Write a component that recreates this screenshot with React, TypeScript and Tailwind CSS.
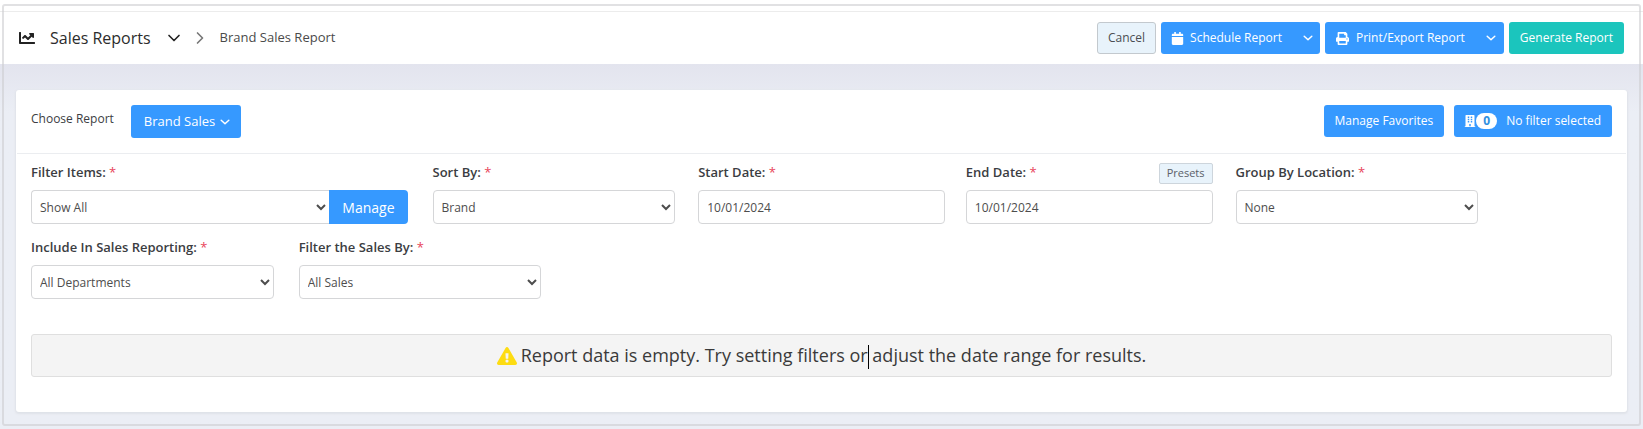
import type { ReactNode } from "react";
import { ChevronDown, ChevronRight } from "lucide-react";
import {
  FaBuilding,
  FaCalendar,
  FaChartLine,
  FaExclamationTriangle,
  FaPrint,
} from "react-icons/fa";

const control =
  "h-[34px] w-full min-w-0 rounded border border-[#d5d6d8] bg-white text-xs text-[#4d4d4d]";
const button =
  "flex h-8 items-center rounded-[3px] bg-[#3699ff] text-xs text-white whitespace-nowrap";

function Label({ id, children }: { id: string; children: ReactNode }) {
  return (
    <label htmlFor={id} className="text-[13px] font-semibold text-[#3b3d42]">
      {children} <span className="font-normal text-[#e8445a]">*</span>
    </label>
  );
}

function SmallChevron() {
  return (
    <svg viewBox="0 0 10 6" className="h-[6px] w-[10px]" fill="none" stroke="currentColor" strokeWidth="1.5" strokeLinecap="round" strokeLinejoin="round">
      <path d="M1.2 1.2 5 4.7 8.8 1.2" />
    </svg>
  );
}

function SelectField({ id, label, value }: { id: string; label: string; value: string }) {
  return (
    <div className="col-span-2">
      <div className="flex h-[26px] items-center">
        <Label id={id}>{label}</Label>
      </div>
      <select id={id} className={`${control} mt-1 pl-1`}>
        <option>{value}</option>
      </select>
    </div>
  );
}

export default function App() {
  return (
    <div className="relative flex flex-col bg-[#ebeef5] font-['Open_Sans',sans-serif] text-[#3b3d42]">
      <header className="bg-white pt-[11px]">
        <div className="flex items-center justify-between border-t border-[#ececec] px-[19px] py-[10px]">
          <div className="flex items-center">
            <FaChartLine className="size-4 text-[#222]" />
            <h1 className="ml-[15px] text-[16px] text-[#2c2c2c]">Sales Reports</h1>
            <button type="button" aria-label="Choose section" className="ml-[13px]">
              <ChevronDown className="size-5 text-[#222]" strokeWidth={2} />
            </button>
            <ChevronRight className="ml-[6px] size-5 text-[#777]" />
            <span className="ml-[10px] text-[13px] text-[#4a4a4a]">Brand Sales Report</span>
          </div>
          <div className="flex items-center gap-[5px]">
            <button
              type="button"
              className="h-8 rounded-[3px] border border-[#c3c9ce] bg-[#e8f3fb] px-[10px] text-xs text-[#4a4d52]"
            >
              Cancel
            </button>
            <div className={button}>
              <button type="button" className="flex h-full items-center gap-[6px] pl-[10px]">
                <FaCalendar className="size-[13px]" />
                Schedule Report
              </button>
              <button type="button" aria-label="Schedule options" className="ml-[21px] flex h-full items-center pr-[7px]">
                <SmallChevron />
              </button>
            </div>
            <div className={button}>
              <button type="button" className="flex h-full items-center gap-[7px] pl-[11px]">
                <FaPrint className="size-[13px]" />
                Print/Export Report
              </button>
              <button type="button" aria-label="Export options" className="ml-[21px] flex h-full items-center pr-2">
                <SmallChevron />
              </button>
            </div>
            <button type="button" className="h-8 rounded-[3px] bg-[#1bc5bd] px-[11px] text-xs text-white">
              Generate Report
            </button>
          </div>
        </div>
      </header>

      <main className="bg-linear-to-b from-[#e3e4ee] to-[#ebeef5] to-[48px] px-4 pt-[26px] pb-[17px]">
        <section className="rounded-[3px] bg-white pb-[35px] shadow-[0_1px_2px_1px_#dfe2e8]">
          <div className="mx-px flex items-start justify-between border-b border-[#ebedf0] px-[14px] py-[15px]">
            <div className="flex items-start">
              <span className="pt-[6px] text-xs">Choose Report</span>
              <button
                type="button"
                className="ml-[17px] flex h-[33px] items-center gap-[5px] rounded-[3px] bg-[#3699ff] pr-[11px] pl-[13px] text-[13px] text-white"
              >
                Brand Sales
                <SmallChevron />
              </button>
            </div>
            <div className="flex items-center gap-[10px]">
              <button type="button" className={`${button} px-[11px]`}>
                Manage Favorites
              </button>
              <button type="button" className={`${button} pr-[11px] pl-[10px]`}>
                <FaBuilding className="size-3" />
                <span className="flex h-4 w-[21px] items-center justify-center rounded-full bg-white text-xs font-bold text-[#2f8fe0]">
                  0
                </span>
                <span className="ml-[9px]">No filter selected</span>
              </button>
            </div>
          </div>

          <form className="grid grid-cols-12 gap-x-[25px] gap-y-[11px] px-[15px] pt-[6px]">
            <div className="col-span-3">
              <div className="flex h-[26px] items-center">
                <Label id="items">Filter Items:</Label>
              </div>
              <div className="mt-1 flex">
                <select id="items" className={`${control} rounded-r-none border-r-0 pl-1`}>
                  <option>Show All</option>
                </select>
                <button
                  type="button"
                  className="h-[34px] rounded-r bg-[#3699ff] px-[13px] text-[14px] text-white"
                >
                  Manage
                </button>
              </div>
            </div>
            <SelectField id="sort" label="Sort By:" value="Brand" />
            <div className="col-span-2 -mx-0.5">
              <div className="flex h-[26px] items-center">
                <Label id="start">Start Date:</Label>
              </div>
              <input id="start" type="text" defaultValue="10/01/2024" className={`${control} mt-1 px-2`} />
            </div>
            <div className="col-span-2 -mx-0.5">
              <div className="flex h-[26px] items-center justify-between">
                <Label id="end">End Date:</Label>
                <button
                  type="button"
                  className="h-[21px] rounded-[2px] border border-[#cdd5dc] bg-[#e8f3fb] px-[7px] text-[11px] text-[#5b6068]"
                >
                  Presets
                </button>
              </div>
              <input id="end" type="text" defaultValue="10/01/2024" className={`${control} mt-1 px-2`} />
            </div>
            <SelectField id="group" label="Group By Location:" value="None" />
            <div className="col-span-1" />
            <SelectField id="include" label="Include In Sales Reporting:" value="All Departments" />
            <SelectField id="sales" label="Filter the Sales By:" value="All Sales" />
          </form>

          <div className="mx-[15px] mt-[35px] flex h-[43px] items-center justify-center rounded-[3px] border border-[#dfdfdf] bg-[#f4f4f4] text-[18px] text-[#3a3a3a]">
            <FaExclamationTriangle className="mr-1 size-5 text-[#fddc12]" />
            <p>
              Report data is empty. Try setting filters or
              <span className="-mr-px inline-block h-6 w-px bg-black align-middle" /> adjust the date range for results.
            </p>
          </div>
        </section>
      </main>
      <div className="pointer-events-none absolute inset-x-[2px] top-1 bottom-[3px] rounded-[3px] border-2 border-[#cdcdd0]/60" />
    </div>
  );
}
